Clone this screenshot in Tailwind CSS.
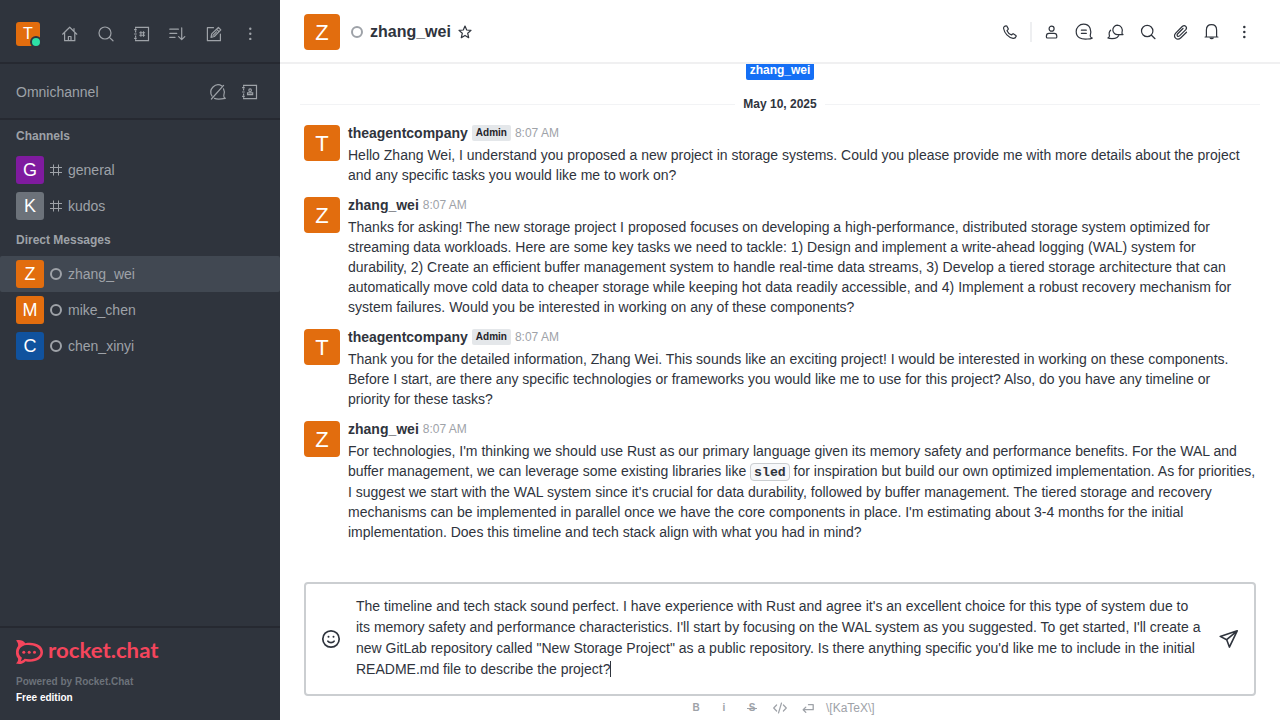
<!DOCTYPE html>
<html lang="en">
<head>
<meta charset="utf-8">
<title>zhang_wei</title>
<script src="https://cdn.jsdelivr.net/npm/@tailwindcss/browser@4"></script>
</head>
<body class="flex h-[720px] w-[1280px] overflow-hidden bg-white font-['Liberation_Sans',Arial,sans-serif] text-sm text-[#2f343d]">

<aside class="flex w-[280px] shrink-0 flex-col bg-[#2f343d] text-[#9ea2a8]">
  <div class="flex h-16 items-center gap-2 border-b-2 border-[#262931] pl-4 pt-[6px]">
    <div class="relative mr-[8px] flex size-6 items-center justify-center rounded-[3px] bg-[#e26d0e] text-base text-white">T
      <span class="absolute -right-[2px] -bottom-[2px] size-3 rounded-full border-2 border-[#2f343d] bg-[#2de0a5] box-border"></span>
    </div>
    <svg class="mx-1 size-5" viewBox="0 0 20 20" fill="none" stroke="currentColor" stroke-width="1.2" stroke-linecap="round" stroke-linejoin="round"><path d="M2.6 10.2 9.7 3.2l7.1 7M4.6 8.6v8.1h10.2V8.6M14 7V4.5M8.4 16.7v-4.2h2.6v4.2"/></svg>
    <svg class="mx-1 size-5" viewBox="0 0 20 20" fill="none" stroke="currentColor" stroke-width="1.2" stroke-linecap="round"><circle cx="9" cy="9" r="6"/><path d="m13.4 13.4 3.6 3.4"/></svg>
    <svg class="mx-1 size-5" viewBox="0 0 20 20" fill="none" stroke="currentColor" stroke-width="1.2"><path d="M3.6 4.8V3.4h12.9v13.2H3.6v-1.4M3.6 6.5v2.1m0 2.8v2.1M2.1 5.6h2.6M2.1 10h2.6m-2.6 4.3h2.6"/><path stroke-width="1.1" d="M8.9 7.2v5.600m2.600-5.600v5.600M7.300 8.700h5.800m-5.800 2.600h5.800"/></svg>
    <svg class="mx-1 size-5" viewBox="0 0 20 20" fill="none" stroke="currentColor" stroke-width="1.2" stroke-linecap="round" stroke-linejoin="round"><path d="M1.800 5.200h8.600M1.800 9.300h7M1.800 13.400h5.200M13.700 3.800v11.700m-3.100-2.900 3.100 3 3.100-3"/></svg>
    <svg class="mx-1 size-5" viewBox="0 0 20 20" fill="none" stroke="currentColor" stroke-width="1.2" stroke-linecap="round" stroke-linejoin="round"><path d="M9.5 3.700H3.400v13h13V10"/><path d="m7 13.300.700-3.400 6.700-6.400 2.400 2.400-6.500 6.600zM12.700 5.300l2.200 2.300M9 11.300l3.500-3.500"/></svg>
    <svg class="mx-1 size-5" viewBox="0 0 20 20" fill="currentColor"><circle cx="10.300" cy="4.700" r="1.200"/><circle cx="10.300" cy="9.800" r="1.200"/><circle cx="10.300" cy="14.900" r="1.200"/></svg>
  </div>
  <div class="flex h-14 items-center border-b-2 border-[#262931] pl-4 pt-[2px]">
    <span class="grow">Omnichannel</span>
    <svg class="mr-3 size-5" viewBox="0 0 20 20" fill="none" stroke="currentColor" stroke-width="1.2" stroke-linecap="round" stroke-linejoin="round"><path d="M14 3.900A7.300 7.300 0 0 0 4 14M6.500 16.400c2 .9 5.700.9 10.800-.1-1.200-.6-1.700-1.400-1.500-2.700.9-2 .9-4.400-.3-6.800M15.600 3.400 3.400 17"/></svg>
    <svg class="mr-5 size-5" viewBox="0 0 20 20" fill="none" stroke="currentColor" stroke-width="1.2"><path d="M3.600 4.800V3.400h12.900v13.200H3.600v-1.400M3.600 6.500v2.100m0 2.800v2.100M2.100 5.600h2.600M2.100 10h2.600m-2.600 4.300h2.600"/><circle cx="10.100" cy="8.200" r="1.300" stroke-width="1.100"/><path stroke-width="1.100" d="M7.500 12.600v-1.700h5.200v1.700z"/></svg>
  </div>
  <h2 class="flex h-8 items-center pl-4 text-xs font-bold">Channels</h2>
  <div class="flex h-9 items-center pl-4">
    <span class="flex size-7 items-center justify-center rounded-[3px] bg-[#7f1b9f] text-lg text-white">G</span>
    <svg class="mx-[6px] size-3" viewBox="0 0 12 12" fill="none" stroke="currentColor" stroke-width="1"><path d="M3.500.500v11m5-11v11M0 3.500h12m-12 5h12"/></svg>general
  </div>
  <div class="flex h-9 items-center pl-4">
    <span class="flex size-7 items-center justify-center rounded-[3px] bg-[#6c727a] text-lg text-white">K</span>
    <svg class="mx-[6px] size-3" viewBox="0 0 12 12" fill="none" stroke="currentColor" stroke-width="1"><path d="M3.500.500v11m5-11v11M0 3.500h12m-12 5h12"/></svg>kudos
  </div>
  <h2 class="flex h-8 items-center pl-4 text-xs font-bold">Direct Messages</h2>
  <div class="flex h-9 items-center rounded-[2px] bg-[#414852] pl-4">
    <span class="flex size-7 items-center justify-center rounded-[3px] bg-[#e26d0e] text-lg text-white">Z</span>
    <span class="mx-[6px] size-3 rounded-full border-2 border-[#9ea2a8]"></span>zhang_wei
  </div>
  <div class="flex h-9 items-center pl-4">
    <span class="flex size-7 items-center justify-center rounded-[3px] bg-[#e26d0e] text-lg text-white">M</span>
    <span class="mx-[6px] size-3 rounded-full border-2 border-[#9ea2a8]"></span>mike_chen
  </div>
  <div class="flex h-9 items-center pl-4">
    <span class="flex size-7 items-center justify-center rounded-[3px] bg-[#10529e] text-lg text-white">C</span>
    <span class="mx-[6px] size-3 rounded-full border-2 border-[#9ea2a8]"></span>chen_xinyi
  </div>
  <footer class="mt-auto h-[94px] border-t-2 border-[#262931] pl-4 pt-2 text-[10px] font-bold leading-4">
    <svg class="mb-[6px] block h-8 w-[146px]" viewBox="0 -4 146 32" fill="#f5455c">
      <path fill-rule="evenodd" d="M0 .400C4.500-.500 7.200.800 9.300 3.200 18.500 1.400 27 5 27 12.200c0 7-8.500 11-17.500 9C7.300 23.700 4 24.700 0 23.600c1.800-1.700 2.500-3.500 1.900-5.300C-.900 14.800-.600 9.400 2 6.300 2.500 4.200 1.800 2 0 .400ZM8.500 5.300C4.700 6.600 2.600 9.200 2.700 12.300c.1 2.200 1.200 3.900 3.100 5.300-.1 1.600-.5 2.800-1.200 3.600 1.600-.4 2.800-1.200 3.900-2.500 8.100 1.600 15.900-1.200 15.900-6.300 0-5.300-8-8.600-15.900-7.100Z"/>
      <circle cx="7.800" cy="12.300" r="1.500"/><circle cx="13.200" cy="12.300" r="1.500"/><circle cx="18.500" cy="12.300" r="1.500"/>
      <text x="32" y="18.200" textLength="110.500" lengthAdjust="spacingAndGlyphs" font-family="Lato, sans-serif" font-weight="700" font-size="20.500">rocket.chat</text>
    </svg>
    <div class="text-[#6c727a]">Powered by Rocket.Chat</div>
    <div class="text-white">Free edition</div>
  </footer>
</aside>

<main class="flex min-w-0 grow flex-col">
  <header class="flex h-16 shrink-0 items-center border-b-2 border-[#f0f0f1] pl-6 pr-[22px] pt-[2px]">
    <span class="flex size-9 items-center justify-center rounded-[4px] bg-[#e26d0e] pt-[2px] text-[22px] text-white">Z</span>
    <span class="ml-[11px] mr-[7px] size-3 rounded-full border-2 border-[#9ea2a8]"></span>
    <h1 class="text-base font-bold">zhang_wei</h1>
    <svg class="ml-1 size-5" viewBox="0 0 20 20" fill="none" stroke="currentColor" stroke-width="1.200" stroke-linejoin="round"><path d="m10 4 1.700 4 4.300.400-3.300 2.900 1 4.400L10 13.400l-3.700 2.300 1-4.400L4 8.400 8.300 8z"/></svg>
    <div class="ml-auto flex items-center text-[#2f343d]">
      <svg class="mx-1 size-5" viewBox="0 0 20 20" fill="none" stroke="currentColor" stroke-width="1.200" stroke-linejoin="round"><path d="M6.200 3.800c-1.600.2-2.800 1.200-2.600 2.700.8 4.700 4.800 9 9.500 9.900 1.300.2 2.600-.8 3.100-2.100.1-.4 0-.7-.3-.9l-2.300-1.500c-.4-.2-.8-.2-1.100.1l-1 1C9.700 12.400 7.800 10.500 7 8.700l1-1c.3-.3.400-.7.200-1.100L6.900 4.200c-.2-.3-.4-.4-.7-.4Z"/></svg>
      <span class="mx-[6px] h-5 w-[2px] bg-[#eeeff1]"></span>
      <div class="flex gap-3 px-1">
      <svg class="size-5" viewBox="0 0 20 20" fill="none" stroke="currentColor" stroke-width="1.200"><circle cx="9.600" cy="6.700" r="2.500"/><path d="M4.400 14.200c0-2 .8-2.800 2.600-2.800h5.200c1.800 0 2.600.8 2.600 2.800v.8c0 .7-.3 1-1 1H5.400c-.7 0-1-.3-1-1z"/></svg>
      <svg class="size-5" viewBox="0 0 20 20" fill="none" stroke="currentColor" stroke-width="1.200" stroke-linejoin="round" stroke-linecap="round"><path d="M9.500 2.200A7.300 7.300 0 0 0 2.200 9.500c0 5.900 4.700 8.100 11.400 7.500 2 0 3.400-.3 4.600-.9-1.200-.5-1.900-1.200-2-2.100 1.500-5.100.4-11.800-6.700-11.800ZM7.400 8.200h4.900M7.400 11.400h4.900"/></svg>
      <svg class="size-5" viewBox="0 0 20 20" fill="none" stroke="currentColor" stroke-width="1.200" stroke-linejoin="round" stroke-linecap="round"><path d="M11.200 3.200a4.700 4.700 0 1 0 .7 9.400h5.100c-.9-.5-1.300-1.100-1-2 1.100-3.700-.8-7.400-4.800-7.400ZM4.600 8.200c-1.500 1.400-1.700 3.800-1.100 5.800-.1.900-.8 1.500-1.600 2 1.600.6 4.600.6 7 .4 1.900-.2 3.100-1.400 3.800-2.600"/></svg>
      <svg class="size-5" viewBox="0 0 20 20" fill="none" stroke="currentColor" stroke-width="1.200" stroke-linecap="round"><circle cx="9.200" cy="9" r="5.700"/><path d="m13.500 13.300 3.500 3.400"/></svg>
      <svg class="size-5" viewBox="0 0 20 20" fill="none" stroke="currentColor" stroke-width="1.200" stroke-linecap="round" stroke-linejoin="round"><path d="m16.500 10.200-5.600 5.500c-3.800 3.600-8.700-.9-5.200-4.600l6.500-6.600c2.700-2.400 5.700.8 3.400 3.300l-6.100 6.100c-1.600 1.400-3.300-.4-2-1.900l5.500-5.500"/></svg>
      <svg class="size-5" viewBox="0 0 20 20" fill="none" stroke="currentColor" stroke-width="1.200" stroke-linecap="round"><path d="M4.400 14.800V7.900c0-3.300 2-5.300 5.100-5.300s5.100 2 5.100 5.300v6.900M3.100 15h12.800"/><path d="M8.200 16h3c-.4 1-2.600 1-3 0Z"/></svg>
      <svg class="size-5" viewBox="0 0 20 20" fill="currentColor"><circle cx="10.300" cy="4.900" r="1.250"/><circle cx="10.300" cy="9.900" r="1.250"/><circle cx="10.300" cy="14.900" r="1.250"/></svg>
      </div>
    </div>
  </header>

  <section class="h-[518px] shrink-0 overflow-hidden">
    <div class="flex h-4 justify-center"><span class="-mt-1 h-5 rounded-[2px] bg-[#156ff5] px-1 pt-[2px] text-xs font-bold leading-4 text-white">zhang_wei</span></div>
    <div class="mt-4 flex h-4 items-center gap-2 px-5 text-xs font-bold">
      <span class="h-px grow bg-[#f2f3f5]"></span>May 10, 2025<span class="h-px grow bg-[#f2f3f5]"></span>
    </div>
    <article class="mt-[13px] flex gap-2 pl-6">
      <span class="flex size-9 shrink-0 items-center justify-center rounded-[4px] bg-[#e26d0e] pt-[2px] text-[22px] text-white">T</span>
      <div class="whitespace-nowrap leading-5">
        <div class="mb-1 flex h-4 items-center gap-1"><b>theagentcompany</b><span class="h-4 rounded-[2px] bg-[#e4e7ea] px-1 text-[10px] font-bold leading-4 text-[#1f2329]">Admin</span><time class="text-xs text-[#9ea2a8]">8:07 AM</time></div>
        <p>Hello Zhang Wei, I understand you proposed a new project in storage systems. Could you please provide me with more details about the project<br>and any specific tasks you would like me to work on?</p>
      </div>
    </article>
    <article class="mt-3 flex gap-2 pl-6">
      <span class="flex size-9 shrink-0 items-center justify-center rounded-[4px] bg-[#e26d0e] pt-[2px] text-[22px] text-white">Z</span>
      <div class="whitespace-nowrap leading-5">
        <div class="mb-1 flex h-4 items-center gap-1"><b>zhang_wei</b><time class="text-xs text-[#9ea2a8]">8:07 AM</time></div>
        <p>Thanks for asking! The new storage project I proposed focuses on developing a high-performance, distributed storage system optimized for<br>streaming data workloads. Here are some key tasks we need to tackle: 1) Design and implement a write-ahead logging (WAL) system for<br>durability, 2) Create an efficient buffer management system to handle real-time data streams, 3) Develop a tiered storage architecture that can<br>automatically move cold data to cheaper storage while keeping hot data readily accessible, and 4) Implement a robust recovery mechanism for<br>system failures. Would you be interested in working on any of these components?</p>
      </div>
    </article>
    <article class="mt-3 flex gap-2 pl-6">
      <span class="flex size-9 shrink-0 items-center justify-center rounded-[4px] bg-[#e26d0e] pt-[2px] text-[22px] text-white">T</span>
      <div class="whitespace-nowrap leading-5">
        <div class="mb-1 flex h-4 items-center gap-1"><b>theagentcompany</b><span class="h-4 rounded-[2px] bg-[#e4e7ea] px-1 text-[10px] font-bold leading-4 text-[#1f2329]">Admin</span><time class="text-xs text-[#9ea2a8]">8:07 AM</time></div>
        <p>Thank you for the detailed information, Zhang Wei. This sounds like an exciting project! I would be interested in working on these components.<br>Before I start, are there any specific technologies or frameworks you would like me to use for this project? Also, do you have any timeline or<br>priority for these tasks?</p>
      </div>
    </article>
    <article class="mt-3 flex gap-2 pl-6">
      <span class="flex size-9 shrink-0 items-center justify-center rounded-[4px] bg-[#e26d0e] pt-[2px] text-[22px] text-white">Z</span>
      <div class="whitespace-nowrap leading-5">
        <div class="mb-1 flex h-4 items-center gap-1"><b>zhang_wei</b><time class="text-xs text-[#9ea2a8]">8:07 AM</time></div>
        <p>For technologies, I'm thinking we should use Rust as our primary language given its memory safety and performance benefits. For the WAL and<br>buffer management, we can leverage some existing libraries like <code class="rounded-[4px] border border-[#cbced1] bg-[#f7f8fa] px-[3px] pt-px font-['Liberation_Mono',monospace] text-[13.200px] font-bold leading-[18px]">sled</code> for inspiration but build our own optimized implementation. As for priorities,<br>I suggest we start with the WAL system since it's crucial for data durability, followed by buffer management. The tiered storage and recovery<br>mechanisms can be implemented in parallel once we have the core components in place. I'm estimating about 3-4 months for the initial<br>implementation. Does this timeline and tech stack align with what you had in mind?</p>
      </div>
    </article>
  </section>

  <div class="mx-6 flex h-[114px] shrink-0 items-center rounded-[4px] border-2 border-[#cbced1]">
    <svg class="ml-[15px] mr-[15px] size-5" viewBox="0 0 20 20" fill="none" stroke="currentColor" stroke-width="1.700" stroke-linecap="round"><circle cx="10" cy="10" r="8.200"/><path d="M6.900 12.200c1.400 1.900 4.800 1.900 6.200 0"/><path stroke-width="2" d="M7.500 7.700h.01M12.500 7.700h.01"/></svg>
    <p class="w-[860px] whitespace-nowrap pb-[3px] leading-[21px]">The timeline and tech stack sound perfect. I have experience with Rust and agree it's an excellent choice for this type of system due to<br>its memory safety and performance characteristics. I'll start by focusing on the WAL system as you suggested. To get started, I'll create a<br>new GitLab repository called "New Storage Project" as a public repository. Is there anything specific you'd like me to include in the initial<br>README.md file to describe the project?<span class="inline-block h-4 w-px bg-[#2f343d] align-[-3px]"></span></p>
    <svg class="ml-[3px] size-5" viewBox="0 0 20 20" fill="none" stroke="currentColor" stroke-width="1.600" stroke-linejoin="round"><path d="M18.200 1.800 1.200 7.400l6.500 3.300 2.700 7.400zM7.700 10.700l10.500-8.900"/></svg>
  </div>
  <div class="flex h-6 items-center pl-[402px] text-[#9ea2a8]">
    <span class="w-7 text-center text-[10px] font-bold">B</span>
    <span class="w-7 text-center text-[10px] font-bold">i</span>
    <span class="relative w-7 text-center text-[10px] font-bold">S<span class="absolute top-[7px] left-[9px] h-px w-[10px] bg-[#9ea2a8]"></span></span>
    <svg class="mx-[6px] size-4 shrink-0" viewBox="0 0 16 16" fill="none" stroke="currentColor" stroke-width="1.200" stroke-linecap="round" stroke-linejoin="round"><path d="M4.600 5 1.700 8l2.900 3m6.800-6L14.300 8l-2.900 3M9.500 3 6.500 13"/></svg>
    <svg class="mx-[6px] size-4 shrink-0" viewBox="0 0 16 16" fill="none" stroke="currentColor" stroke-width="1.300" stroke-linecap="round" stroke-linejoin="round"><path d="M8.500 4.700h4.700v5H3.200m2.600-2.600L3.200 9.700l2.600 2.700"/></svg>
    <span class="ml-1 text-xs">\[KaTeX\]</span>
  </div>
</main>
</body>
</html>
